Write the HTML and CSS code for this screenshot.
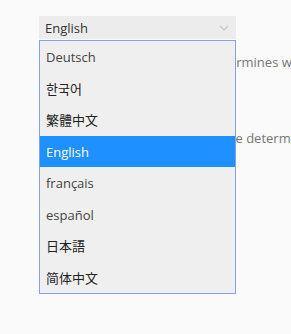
FILE: index.html
```html
<!DOCTYPE html>
<html lang="en">
<head>
    <meta charset="UTF-8">
    <meta name="viewport" content="width=device-width, initial-scale=1.0">
    <title>Language</title>
    <link rel="stylesheet" href="styles.css">
</head>
<body>
    <main class="page">
        <div class="field">
            <div class="select">
                <span>English</span>
                <svg class="chevron" width="10" height="6" viewBox="0 0 10 6">
                    <path d="M1 1 L5 5 L9 1" fill="none" stroke="#c4c4c4" stroke-width="1.2"/>
                </svg>
            </div>

            <ul class="options">
                <li>Deutsch</li>
                <li class="cjk">한국어</li>
                <li class="cjk">繁體中文</li>
                <li class="active">English</li>
                <li>français</li>
                <li>español</li>
                <li class="cjk">日本語</li>
                <li class="cjk">简体中文</li>
            </ul>
        </div>

        <p class="note first">The display language determines which</p>
        <p class="note second">The region setting we determines formats</p>
    </main>
</body>
</html>
```

FILE: styles.css
```css
body{
    margin: 0;
    background-color: #fafafa;
    font-family: "Open Sans", "Noto Sans CJK KR", sans-serif;
    color: #555;
    overflow: hidden;
}

.page{
    box-sizing: border-box;
    min-height: 334px;
    padding: 16px 0 0 39px;
}

.field{
    position: relative;
    width: 197px;
}

.select{
    display: flex;
    align-items: center;
    justify-content: space-between;
    height: 23px;
    padding: 0 6px;
    background-color: #ececec;
    font-size: 13px;
    color: #333;
}

.chevron{
    margin-right: 1px;
}

.options{
    position: absolute;
    top: 24px;
    left: 0;
    width: 195px;
    margin: 0;
    padding: 0;
    list-style: none;
    background-color: #efefef;
    border: 1px solid #86a3dc;
    z-index: 2;
}

.options li{
    height: 31.5px;
    line-height: 32px;
    padding-left: 6px;
    font-size: 13px;
    color: #444;
}

.options .cjk{
    color: #222;
    font-family: "Noto Sans CJK KR", sans-serif;
}

.options .active{
    background-color: #1e90ff;
    color: #fff;
}

.note{
    margin: 0;
    overflow: hidden;
    white-space: nowrap;
    font-size: 13px;
    color: #777;
}

.first{
    width: 212px;
    margin-top: 14px;
    padding-left: 40px;
}

.second{
    width: 178px;
    margin-top: 58px;
    padding-left: 74px;
}
```
